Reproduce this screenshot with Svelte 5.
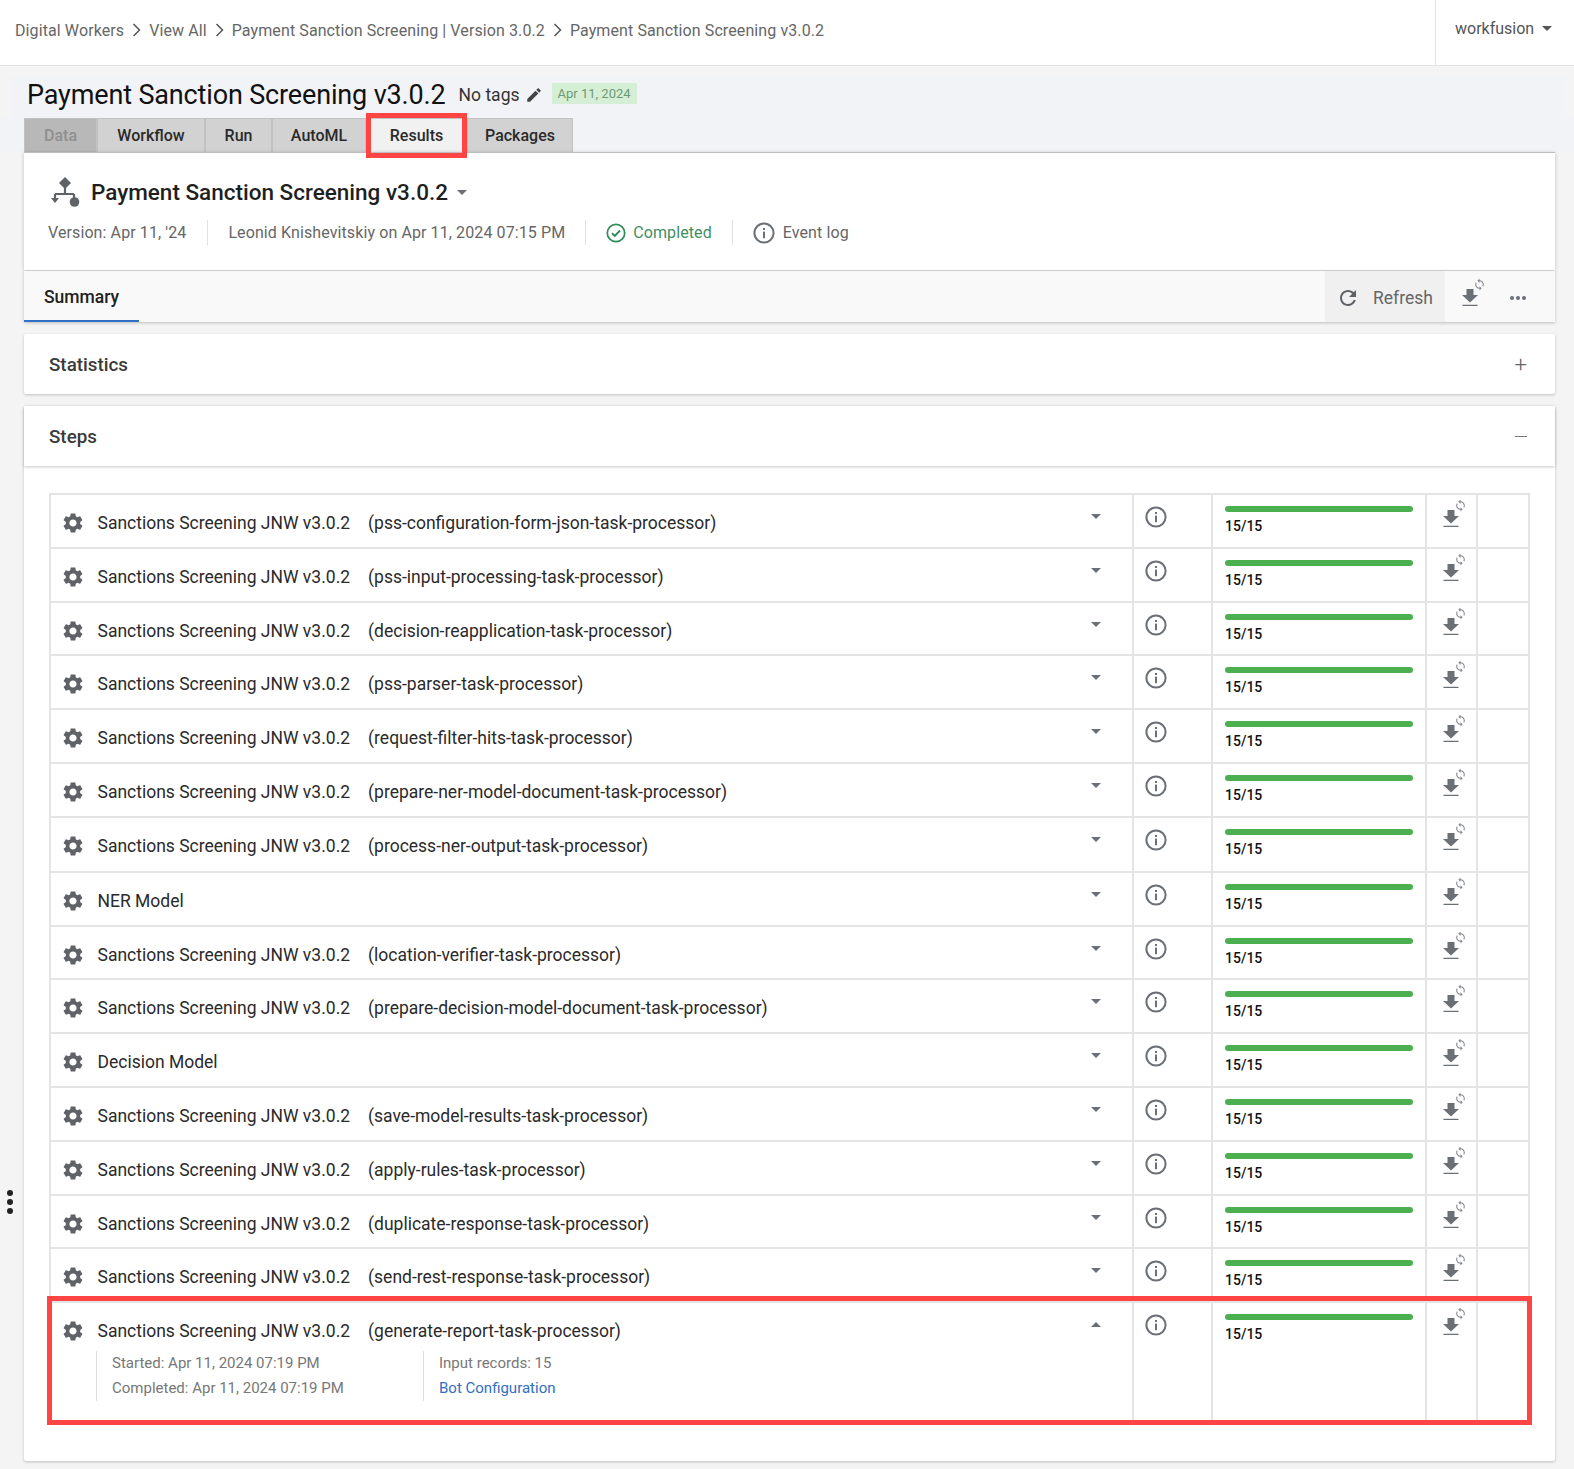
<script>
  const crumbs = ['Digital Workers', 'View All', 'Payment Sanction Screening | Version 3.0.2', 'Payment Sanction Screening v3.0.2'];
  const tabs = ['Data', 'Workflow', 'Run', 'AutoML', 'Results', 'Packages'];
  const jnw = 'Sanctions Screening JNW v3.0.2';
  const steps = [
    { name: jnw, task: 'pss-configuration-form-json-task-processor' },
    { name: jnw, task: 'pss-input-processing-task-processor' },
    { name: jnw, task: 'decision-reapplication-task-processor' },
    { name: jnw, task: 'pss-parser-task-processor' },
    { name: jnw, task: 'request-filter-hits-task-processor' },
    { name: jnw, task: 'prepare-ner-model-document-task-processor' },
    { name: jnw, task: 'process-ner-output-task-processor' },
    { name: 'NER Model' },
    { name: jnw, task: 'location-verifier-task-processor' },
    { name: jnw, task: 'prepare-decision-model-document-task-processor' },
    { name: 'Decision Model' },
    { name: jnw, task: 'save-model-results-task-processor' },
    { name: jnw, task: 'apply-rules-task-processor' },
    { name: jnw, task: 'duplicate-response-task-processor' },
    { name: jnw, task: 'send-rest-response-task-processor' },
    { name: jnw, task: 'generate-report-task-processor', open: true }
  ];
</script>

{#snippet info(size)}
  <svg class="info" width={size} height={size} viewBox="0 0 22 22">
    <circle cx="11" cy="11" r="9.6" fill="none" stroke="currentColor" stroke-width="2" />
    <rect x="10" y="9.6" width="2" height="6.6" fill="currentColor" />
    <rect x="10" y="6" width="2" height="2" fill="currentColor" />
  </svg>
{/snippet}

{#snippet download()}
  <span class="dl">
    <svg class="dl-arrow" width="18" height="18" viewBox="0 0 18 18"><path fill="currentColor" d="M5.500 0h7v6H17l-8 7.500L1 6h4.500zM1.500 15.700h15V17h-15z" /></svg>
    <svg class="dl-sync" width="13" height="13" viewBox="0 0 24 24"><path fill="currentColor" d="M12 4V1L8 5l4 4V6c3.310 0 6 2.690 6 6 0 1.010-.25 1.970-.7 2.800l1.460 1.460C19.540 15.030 20 13.570 20 12c0-4.420-3.580-8-8-8zm0 14c-3.310 0-6-2.690-6-6 0-1.010.25-1.970.7-2.800L5.240 7.740C4.460 8.970 4 10.430 4 12c0 4.420 3.580 8 8 8v3l4-4-4-4v3z" /></svg>
  </span>
{/snippet}

<div class="page">
  <header class="topbar">
    <nav class="crumbs">
      {#each crumbs as crumb, i}
        {#if i > 0}
          <svg class="chev" width="9" height="14" viewBox="0 0 9 14"><path d="M1.500 1l6 6-6 6" fill="none" stroke="#555" stroke-width="1.500" /></svg>
        {/if}
        <span>{crumb}</span>
      {/each}
    </nav>
    <div class="user"><span>workfusion</span><i class="caret dark"></i></div>
  </header>

  <div class="title-row">
    <h1>Payment Sanction Screening v3.0.2</h1>
    <span class="tags">No tags</span>
    <svg width="18" height="18" viewBox="0 0 24 24"><path fill="#444" d="M3 17.250V21h3.750L17.810 9.940l-3.750-3.750L3 17.250zM20.710 7.040c.39-.39.39-1.020 0-1.410l-2.340-2.340c-.39-.39-1.020-.39-1.410 0l-1.830 1.830 3.750 3.750 1.830-1.830z" /></svg>
    <span class="date">Apr 11, 2024</span>
  </div>

  <div class="tabs">
    {#each tabs as tab}
      <div class="tab" class:disabled={tab === 'Data'} class:active={tab === 'Results'}>{tab}</div>
    {/each}
  </div>

  <main class="content">
    <section class="run-card">
      <div class="run-title">
        <svg width="32" height="32" viewBox="0 0 32 32">
          <path fill="#5f6368" d="M15 1l6 6-6 6-6-6z" />
          <path fill="none" stroke="#5f6368" stroke-width="2.200" d="M15 12v6M5 18h19M5 18v5M24 18v4" />
          <path fill="#5f6368" d="M1 22h8l-4 5z" />
          <circle cx="24.500" cy="26" r="4.800" fill="#5f6368" />
        </svg>
        <h2>Payment Sanction Screening v3.0.2</h2>
        <i class="caret"></i>
      </div>
      <div class="run-meta">
        <span class="meta">Version: Apr 11, '24</span>
        <span class="meta">Leonid Knishevitskiy on Apr 11, 2024 07:15 PM</span>
        <span class="meta done">
          <svg width="20" height="20" viewBox="0 0 20 20">
            <circle cx="10" cy="10" r="8.700" fill="none" stroke="#2e8b57" stroke-width="1.700" />
            <path d="M6 10.300l2.800 2.700L14 7.500" fill="none" stroke="#2e8b57" stroke-width="1.900" />
          </svg>
          Completed
        </span>
        <span class="meta log">{@render info(22)} Event log</span>
      </div>
    </section>

    <div class="summary-bar">
      <div class="summary-tab">Summary</div>
      <div class="summary-actions">
        <button class="refresh">
          <svg width="24" height="24" viewBox="0 0 24 24"><path fill="#5f6368" d="M17.650 6.350C16.200 4.900 14.210 4 12 4c-4.420 0-7.990 3.580-7.990 8s3.570 8 7.990 8c3.730 0 6.840-2.550 7.730-6h-2.080c-.82 2.330-3.040 4-5.650 4-3.310 0-6-2.690-6-6s2.690-6 6-6c1.660 0 3.140.69 4.220 1.780L13 11h7V4l-2.350 2.350z" /></svg>
          Refresh
        </button>
        <div class="bar-dl">{@render download()}</div>
        <div class="dots"><b></b><b></b><b></b></div>
      </div>
    </div>

    <section class="panel stats">
      <h3>Statistics</h3>
      <span class="sign">+</span>
    </section>

    <section class="steps-card">
      <div class="panel steps-head">
        <h3>Steps</h3>
        <span class="minus"></span>
      </div>
      <div class="steps-body">
        <div class="table">
          {#each steps as step}
            <div class="row" class:open={step.open}>
              <div class="cell main">
                <div class="step-line">
                  <svg class="gear" width="24" height="24" viewBox="0 0 24 24"><path fill="#5f6368" d="M19.140 12.940c.04-.3.06-.61.06-.94 0-.32-.02-.64-.07-.94l2.030-1.580c.18-.14.23-.41.12-.61l-1.920-3.320c-.12-.22-.37-.29-.59-.22l-2.390.96c-.5-.38-1.030-.7-1.620-.94l-.36-2.540c-.04-.24-.24-.41-.48-.41h-3.840c-.24 0-.43.17-.47.41l-.36 2.540c-.59.24-1.130.57-1.620.94l-2.390-.96c-.22-.08-.47 0-.59.22L2.740 8.870c-.12.21-.08.47.12.61l2.030 1.580c-.05.3-.09.63-.09.94s.02.64.07.94l-2.030 1.580c-.18.14-.23.41-.12.61l1.920 3.320c.12.22.37.29.59.22l2.390-.96c.5.38 1.030.7 1.620.94l.36 2.540c.05.24.24.41.48.41h3.840c.24 0 .44-.17.47-.41l.36-2.540c.59-.24 1.130-.56 1.620-.94l2.390.96c.22.08.47 0 .59-.22l1.920-3.320c.12-.22.07-.47-.12-.61l-2.010-1.580zM12 15.600c-1.980 0-3.600-1.620-3.600-3.600s1.620-3.600 3.600-3.600 3.600 1.620 3.600 3.600-1.620 3.600-3.600 3.600z" /></svg>
                  <span class="step-name">{step.name}</span>
                  {#if step.task}<span class="step-task">({step.task})</span>{/if}
                  <i class="caret" class:up={step.open}></i>
                </div>
                {#if step.open}
                  <div class="details">
                    <div class="detail-col">
                      <span>Started: Apr 11, 2024 07:19 PM</span>
                      <span>Completed: Apr 11, 2024 07:19 PM</span>
                    </div>
                    <div class="detail-col">
                      <span>Input records: 15</span>
                      <a href="#bot">Bot Configuration</a>
                    </div>
                  </div>
                {/if}
              </div>
              <div class="cell info-cell">{@render info(22)}</div>
              <div class="cell progress">
                <div class="bar"></div>
                <span>15/15</span>
              </div>
              <div class="cell dl-cell">{@render download()}</div>
              <div class="cell last"></div>
            </div>
          {/each}
          <div class="mark-row"></div>
        </div>
      </div>
    </section>
  </main>

  <div class="side-dots"><b></b><b></b><b></b></div>
  <div class="mark mark-tab"></div>
</div>

<style>
  :global(body) {
    margin: 0;
    background: #f4f4f4;
    font-family: Roboto, "Liberation Sans", sans-serif;
  }

  .page {
    position: relative;
    width: 1574px;
    height: 1469px;
    overflow: hidden;
  }

  .topbar {
    display: flex;
    justify-content: space-between;
    height: 65px;
    background: #fff;
    border-bottom: 1px solid #e3e3e3;
  }

  .crumbs {
    display: flex;
    align-items: center;
    gap: 8px;
    padding: 0 0 5px 15px;
    font-size: 16px;
    letter-spacing: 0.1px;
    color: #666;
  }

  .user {
    display: flex;
    align-items: center;
    gap: 8px;
    width: 139px;
    padding: 0 0 8px 19px;
    box-sizing: border-box;
    border-left: 1px solid #e3e3e3;
    font-size: 16px;
    color: #555;
  }

  .caret {
    display: inline-block;
    width: 0;
    height: 0;
    border-left: 5px solid transparent;
    border-right: 5px solid transparent;
    border-top: 5px solid #6b6f76;
  }

  .caret.dark {
    border-top-color: #555;
  }

  .caret.up {
    border-top: 0;
    border-bottom: 5px solid #6b6f76;
  }

  .title-row {
    display: flex;
    align-items: center;
    height: 42px;
    box-sizing: border-box;
    margin: 10px 8px 0 11px;
    padding: 0 0 5px 16px;
    background: #f1f3f7;
  }

  h1 {
    margin: 0 13px 0 0;
    font-size: 27px;
    font-weight: 400;
    color: #111;
    letter-spacing: -0.15px;
  }

  .tags {
    margin-right: 5px;
    font-size: 17.500px;
    color: #333;
  }

  .date {
    margin: 0 0 3px 9px;
    padding: 3px 6px;
    background: #d5efd6;
    font-size: 13px;
    color: #6d9a72;
  }

  .tabs {
    display: flex;
    height: 34px;
    padding-left: 24px;
    background: #f1f3f7;
    box-sizing: border-box;
  }

  .tab {
    display: flex;
    align-items: center;
    justify-content: center;
    box-sizing: border-box;
    background: #d2d2d2;
    border: 1px solid #c2c2c2;
    border-bottom: 0;
    font-size: 16px;
    font-weight: 500;
    color: #2a2a2a;
    height: 34px;
  }

  .tab:nth-child(1) { width: 73px; }
  .tab:nth-child(2) { width: 108px; }
  .tab:nth-child(3) { width: 67px; }
  .tab:nth-child(4) { width: 94px; }
  .tab:nth-child(5) { width: 101px; }
  .tab:nth-child(6) { width: 106px; }

  .tab.disabled {
    background: #b8b8b8;
    color: #8f8f8f;
  }

  .tab.active {
    background: #f1f1f1;
  }

  .content {
    display: flex;
    flex-direction: column;
    width: 1531px;
    margin-left: 24px;
  }

  .run-card {
    height: 118px;
    background: #fff;
    border-top: 1px solid #bdbdbd;
    box-shadow: 0 1px 4px rgba(0, 0, 0, 0.22);
    box-sizing: border-box;
    padding: 23px 24px 0 26px;
  }

  .run-title {
    display: flex;
    align-items: center;
    height: 32px;
  }

  h2 {
    margin: 0 9px 0 9px;
    font-size: 22.500px;
    font-weight: 500;
    color: #1f1f1f;
  }

  .run-meta {
    display: flex;
    align-items: center;
    margin: 12px 0 0 -2px;
    height: 25px;
  }

  .meta {
    display: flex;
    align-items: center;
    gap: 7px;
    height: 25px;
    padding: 0 20px;
    border-left: 1px solid #e1e1e1;
    font-size: 16px;
    letter-spacing: 0.1px;
    color: #666;
  }

  .meta:first-child {
    padding: 0 21px 0 0;
    border-left: 0;
  }

  .meta.done {
    color: #3f8f63;
  }

  .meta.log {
    gap: 8px;
  }

  .info {
    display: block;
    color: #6b6f76;
    flex: none;
  }

  .summary-bar {
    display: flex;
    justify-content: space-between;
    height: 51px;
    margin-top: 1px;
    background: #f9f9f9;
    box-shadow: 0 1px 3px rgba(0, 0, 0, 0.22);
  }

  .summary-tab {
    display: flex;
    align-items: center;
    box-sizing: border-box;
    width: 115px;
    padding: 3px 0 0 20px;
    border-bottom: 2px solid #2f6fc4;
    font-size: 17.500px;
    font-weight: 500;
    color: #222;
  }

  .summary-actions {
    display: flex;
    align-items: stretch;
  }

  .refresh {
    display: flex;
    align-items: center;
    gap: 13px;
    width: 120px;
    padding: 2px 0 0 11px;
    box-sizing: border-box;
    border: 0;
    background: #f0f0f0;
    font: inherit;
    font-size: 17.500px;
    color: #666;
  }

  .bar-dl {
    display: flex;
    align-items: center;
    width: 60px;
    padding: 2px 0 0 15.500px;
    box-sizing: border-box;
  }

  .dots {
    display: flex;
    align-items: center;
    gap: 2px;
    width: 50px;
    padding: 3px 0 0 5px;
    box-sizing: border-box;
  }

  .dots b {
    width: 4px;
    height: 4px;
    border-radius: 50%;
    background: #6b6f76;
  }

  .dl {
    position: relative;
    display: block;
    width: 18px;
    height: 18px;
    color: #6b6f76;
  }

  .dl-arrow {
    display: block;
  }

  .dl-sync {
    position: absolute;
    top: -11px;
    left: 12px;
    color: #858890;
  }

  .panel {
    display: flex;
    align-items: center;
    justify-content: space-between;
    box-sizing: border-box;
    height: 60px;
    padding: 1px 28px 0 25px;
    background: #fff;
  }

  .stats {
    margin-top: 12px;
    box-shadow: 0 1px 3px rgba(0, 0, 0, 0.22);
    border-radius: 2px;
  }

  h3 {
    margin: 0;
    font-size: 18.800px;
    font-weight: 500;
    color: #3a3a3a;
  }

  .sign {
    font-size: 22px;
    font-weight: 300;
    color: #666;
  }

  .minus {
    width: 12px;
    height: 1.500px;
    background: #777;
  }

  .steps-card {
    margin-top: 12px;
    height: 1055px;
    background: #fff;
    box-shadow: 0 1px 3px rgba(0, 0, 0, 0.22);
    border-radius: 2px;
  }

  .steps-head {
    position: relative;
    box-shadow: 0 1px 3px rgba(0, 0, 0, 0.22);
  }

  .steps-body {
    padding: 27px 25px 0;
  }

  .table {
    position: relative;
    border-top: 2px solid #e4e4e4;
    border-left: 2px solid #e4e4e4;
    border-right: 2px solid #e4e4e4;
    width: 1481px;
    box-sizing: border-box;
  }

  .row {
    display: grid;
    grid-template-columns: 1083px 79px 214px 51px 1fr;
    height: 53.800px;
    box-sizing: border-box;
    border-bottom: 2px solid #e4e4e4;
  }

  .row:nth-child(7) {
    height: 55px;
  }

  .row.open {
    height: 120px;
    border-bottom: 0;
  }

  .cell {
    box-sizing: border-box;
    border-right: 2px solid #e4e4e4;
  }

  .cell.last {
    border-right: 0;
  }

  .main {
    padding: 16px 0 0 10px;
  }

  .step-line {
    position: relative;
    display: flex;
    align-items: center;
    height: 24px;
  }

  .gear {
    margin-right: 12.500px;
  }

  .step-name {
    font-size: 17.500px;
    color: #2a2a2a;
  }

  .step-task {
    margin-left: 18px;
    font-size: 17.500px;
    color: #2a2a2a;
  }

  .step-line .caret {
    position: absolute;
    left: 1030px;
    top: 3px;
  }

  .details {
    display: flex;
    margin: 8px 0 0 35px;
    font-size: 15px;
    color: #777;
  }

  .detail-col {
    display: flex;
    flex-direction: column;
    justify-content: space-between;
    box-sizing: border-box;
    height: 50px;
    width: 327px;
    padding: 0 0 0 15px;
    border-left: 1px solid #dcdcdc;
    line-height: 25px;
  }

  .detail-col a {
    color: #2f6fc4;
    text-decoration: none;
  }

  .info-cell {
    padding: 11px 0 0 11px;
  }

  .progress {
    padding: 11px 0 0 12px;
    font-size: 14px;
    font-weight: 500;
    color: #111;
  }

  .bar {
    width: 188px;
    height: 6px;
    margin-bottom: 6px;
    border-radius: 3px;
    background: #4caf50;
  }

  .dl-cell {
    padding: 15px 0 0 14.500px;
  }

  .side-dots {
    position: absolute;
    left: 7px;
    top: 1190px;
    display: flex;
    flex-direction: column;
    gap: 3px;
  }

  .side-dots b {
    width: 6px;
    height: 6px;
    border-radius: 50%;
    background: #222;
  }

  .mark {
    position: absolute;
    box-sizing: border-box;
    border: 5px solid #ff4444;
    pointer-events: none;
  }

  .mark-tab {
    left: 366px;
    top: 113px;
    width: 101px;
    height: 45px;
  }

  .mark-row {
    position: absolute;
    left: -4px;
    right: -4px;
    bottom: -2px;
    height: 129px;
    box-sizing: border-box;
    border: 5px solid #ff4444;
    pointer-events: none;
  }
</style>
